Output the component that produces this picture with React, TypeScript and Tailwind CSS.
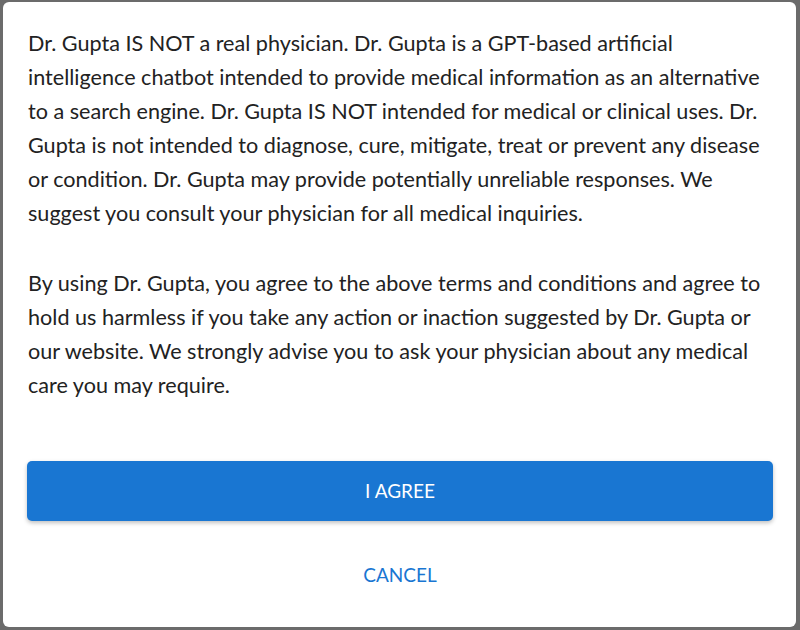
export default function App() {
  return (
    <div
      className="h-[630px] w-[800px] overflow-hidden bg-[#6b6b6b] pt-[2px] pl-[3px] pr-[4px]"
      style={{ fontFamily: "Lato, 'Noto Sans', sans-serif" }}
    >
      <div className="h-[625px] rounded-[6px] bg-white px-[24px] pt-[24px]">
        <div className="pl-[1px] text-[21.6px] leading-[34px] text-[#222222]">
          <p>
            Dr. Gupta IS NOT a real physician. Dr. Gupta is a GPT-based artificial
            <br />
            intelligence chatbot intended to provide medical information as an alternative
            <br />
            to a search engine. Dr. Gupta IS NOT intended for medical or clinical uses. Dr.
            <br />
            Gupta is not intended to diagnose, cure, mitigate, treat or prevent any disease
            <br />
            or condition. Dr. Gupta may provide potentially unreliable responses. We
            <br />
            suggest you consult your physician for all medical inquiries.
          </p>
          <p className="mt-[36px]">
            By using Dr. Gupta, you agree to the above terms and conditions and agree to
            <br />
            hold us harmless if you take any action or inaction suggested by Dr. Gupta or
            <br />
            our website. We strongly advise you to ask your physician about any medical
            <br />
            care you may require.
          </p>
        </div>
        <button className="mt-[59px] flex h-[60px] w-[746px] items-center justify-center rounded-[5px] bg-[#1976d2] text-[19px] text-white shadow-[0_2px_4px_rgba(0,0,0,0.25)]">
          I AGREE
        </button>
        <button className="mt-[36px] flex h-[36px] w-[746px] items-center justify-center text-[19px] text-[#1976d2]">
          CANCEL
        </button>
      </div>
    </div>
  );
}
